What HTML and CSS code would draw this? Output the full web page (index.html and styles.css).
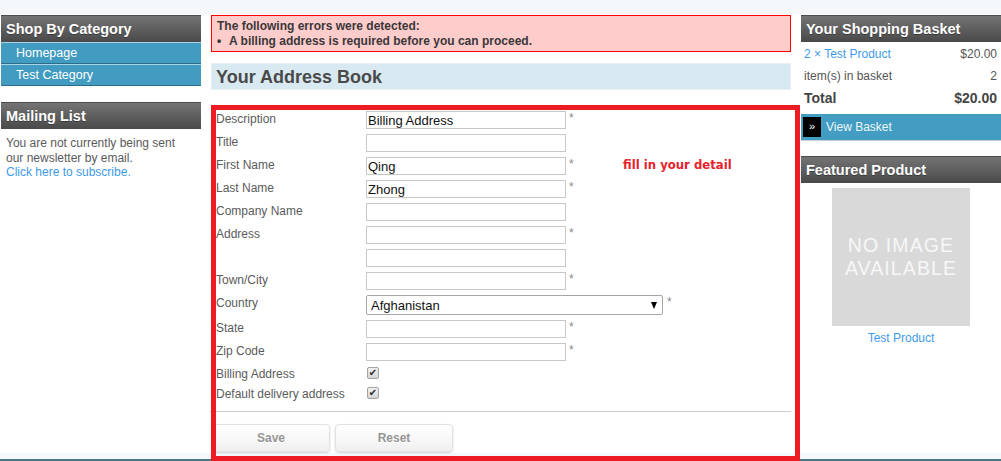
FILE: index.html
```html
<!DOCTYPE html>
<html lang="en">
<head>
<meta charset="utf-8">
<title>Your Address Book</title>
<link rel="stylesheet" href="styles.css">
</head>
<body>
<div class="topstrip"></div>
<div class="wrapper">
  <aside class="side">
    <section class="box">
      <h2 class="box-head">Shop By Category</h2>
      <ul class="cat-nav">
        <li><a href="#">Homepage</a></li>
        <li><a href="#">Test Category</a></li>
      </ul>
    </section>
    <section class="box mailing">
      <h2 class="box-head">Mailing List</h2>
      <p class="box-text">You are not currently being sent our newsletter by email.<br><a href="#" class="link">Click here to subscribe.</a></p>
    </section>
  </aside>

  <main class="center">
    <div class="errors">
      <p>The following errors were detected:</p>
      <ul><li><span class="bullet">•</span>A billing address is required before you can proceed.</li></ul>
    </div>
    <h1 class="page-title">Your Address Book</h1>
    <form class="address-form">
      <div class="fields">
        <label class="lbl">Description</label>
        <div class="ctl"><input class="txt" type="text" value="Billing Address"><span class="req">*</span></div>
        <label class="lbl">Title</label>
        <div class="ctl"><input class="txt" type="text"></div>
        <label class="lbl">First Name</label>
        <div class="ctl"><input class="txt" type="text" value="Qing"><span class="req">*</span></div>
        <label class="lbl">Last Name</label>
        <div class="ctl"><input class="txt" type="text" value="Zhong"><span class="req">*</span></div>
        <label class="lbl">Company Name</label>
        <div class="ctl"><input class="txt" type="text"></div>
        <label class="lbl">Address</label>
        <div class="ctl"><input class="txt" type="text"><span class="req">*</span></div>
        <span class="lbl"></span>
        <div class="ctl"><input class="txt" type="text"></div>
        <label class="lbl">Town/City</label>
        <div class="ctl"><input class="txt" type="text"><span class="req">*</span></div>
        <label class="lbl">Country</label>
        <div class="ctl"><span class="sel-wrap"><select class="sel"><option>Afghanistan</option></select></span><span class="req req-sel">*</span></div>
        <label class="lbl">State</label>
        <div class="ctl"><input class="txt" type="text"><span class="req">*</span></div>
        <label class="lbl">Zip Code</label>
        <div class="ctl"><input class="txt" type="text"><span class="req">*</span></div>
        <label class="lbl">Billing Address</label>
        <div class="ctl"><label class="chk"><input type="checkbox" checked><span class="chk-box">✔</span></label></div>
        <label class="lbl">Default delivery address</label>
        <div class="ctl"><label class="chk"><input type="checkbox" checked><span class="chk-box">✔</span></label></div>
      </div>
      <hr class="divider">
      <div class="actions">
        <button type="button" class="btn">Save</button>
        <button type="reset" class="btn">Reset</button>
      </div>
      <div class="annot-box"></div>
      <p class="annot-note">fill in your detail</p>
    </form>
  </main>

  <aside class="side">
    <section class="box">
      <h2 class="box-head">Your Shopping Basket</h2>
      <div class="basket">
        <div class="b-row"><a href="#" class="link">2 × Test Product</a><span>$20.00</span></div>
        <div class="b-row"><span>item(s) in basket</span><span>2</span></div>
        <div class="b-row b-total"><span>Total</span><span>$20.00</span></div>
      </div>
      <a href="#" class="view-basket"><span class="vb-icon">»</span>View Basket</a>
    </section>
    <section class="box featured">
      <h2 class="box-head">Featured Product</h2>
      <div class="noimg"><span class="noimg-line">NO IMAGE</span><span class="noimg-line">AVAILABLE</span></div>
      <a href="#" class="link feat-link">Test Product</a>
    </section>
  </aside>
</div>
<footer class="footer"><div class="footer-bar"></div></footer>
</body>
</html>
```
FILE: styles.css
```css
* { box-sizing: border-box; }
html, body { margin: 0; padding: 0; }
body {
  background: #f5f8fb;
  font-family: "Liberation Sans", Arial, sans-serif;
  font-size: 12px;
  color: #555;
  overflow: hidden;
}
a { text-decoration: none; }
.link { color: #3d9be9; }

.topstrip { height: 14px; }

.wrapper {
  display: flex;
  align-items: flex-start;
  gap: 10px;
  padding: 1px 0 0 1px;
  background: #fff;
}

.side { width: 200px; flex: none; }
.center { width: 580px; flex: none; }

.box-head {
  margin: 0;
  height: 27px;
  line-height: 26px;
  padding-left: 5px;
  border-top: 1px solid #4c4c4c;
  background: linear-gradient(#747474, #494949);
  color: #fff;
  font-size: 14.5px;
  font-weight: bold;
  text-shadow: 0 1px 0 rgba(0,0,0,.35);
}

.cat-nav { list-style: none; margin: 0; padding: 0; }
.cat-nav li {
  height: 22px;
  border-top: 1px solid #a9d3e5;
  border-bottom: 1px solid #2d6c88;
  background: #429bc1;
}
.cat-nav a {
  display: block;
  line-height: 21px;
  padding-left: 15px;
  color: #fff;
  font-size: 12.5px;
}

.mailing { margin-top: 16px; }
.box-text {
  margin: 0;
  padding: 7px 16px 0 5px;
  line-height: 14.5px;
  color: #5a5a5a;
}

/* center */
.errors {
  height: 37px;
  background: #ffcccc;
  border: 1px solid #ff0000;
  padding: 3px 5px 2px;
  line-height: 15px;
  font-weight: bold;
  color: #383838;
}
.errors p, .errors ul { margin: 0; padding: 0; list-style: none; }
.bullet { display: inline-block; width: 12px; }

.page-title {
  margin: 11px 0 0;
  height: 27px;
  line-height: 26px;
  padding-left: 4px;
  background: #d9e9f2;
  border: 1px solid #e8eff4;
  font-size: 18px;
  font-weight: bold;
  color: #4a4a4a;
}

.address-form {
  position: relative;
  margin-top: 15px;
  padding: 6px 0 1px;
}
.fields {
  display: grid;
  grid-template-columns: 150px 1fr;
  row-gap: 5px;
  padding-left: 5px;
}
.lbl {
  display: block;
  padding-top: 1px;
  line-height: 14px;
  color: #5b5b5b;
}
.ctl { display: flex; align-items: flex-start; }
.txt {
  width: 200px;
  height: 18px;
  margin: 0;
  padding: 0 1px;
  border: 1px solid #c8c8c8;
  font-family: "Liberation Sans", Arial, sans-serif;
  font-size: 13px;
  color: #111;
  background: #fff;
}
.req {
  margin-left: 3px;
  line-height: 14px;
  color: #8a8a8a;
  font-size: 12px;
}
.req-sel { margin-left: 4px; }

.sel-wrap { position: relative; display: block; }
.sel {
  display: block;
  width: 297px;
  height: 20px;
  margin: 0;
  padding: 0 0 0 4px;
  border: 1px solid #a6a6a6;
  border-radius: 2px;
  background: #fff;
  font-family: "Liberation Sans", Arial, sans-serif;
  font-size: 13px;
  color: #111;
  appearance: none;
  -webkit-appearance: none;
}
.sel-wrap::after {
  content: "";
  position: absolute;
  right: 6px;
  top: 7px;
  border-left: 3.5px solid transparent;
  border-right: 3.5px solid transparent;
  border-top: 7px solid #000;
  pointer-events: none;
}

.chk { display: block; height: 15px; }
.chk input { position: absolute; opacity: 0; width: 0; height: 0; margin: 0; }
.chk-box {
  display: block;
  width: 12px;
  height: 12px;
  margin: 1px 0 0 1px;
  border: 1px solid #a3a3a3;
  border-radius: 2px;
  background: linear-gradient(#f0f0f0, #d6d6d6);
  font-family: "DejaVu Sans", sans-serif;
  font-size: 10px;
  line-height: 10px;
  text-align: center;
  color: #2e2e2e;
}

.divider {
  margin: 10px 0 12px -1px;
  border: 0;
  border-top: 1px solid #cfcfcf;
  height: 0;
}
.actions { display: flex; gap: 5px; padding-left: 1px; }
.btn {
  width: 118px;
  height: 28px;
  margin: 0;
  border: 1px solid #e2e2e2;
  border-radius: 4px;
  background: linear-gradient(#ffffff, #f0f0f0);
  box-shadow: 0 1px 2px rgba(0,0,0,.18);
  font-family: "Liberation Sans", Arial, sans-serif;
  font-size: 12px;
  font-weight: bold;
  color: #959595;
  text-shadow: 0 1px 0 #fff;
}

/* annotation drawn over the form */
.annot-box {
  position: absolute;
  top: 0;
  left: 0;
  right: -9px;
  bottom: -8px;
  border: 5px solid #ed1c24;
  pointer-events: none;
}
.annot-note {
  position: absolute;
  left: 412px;
  top: 53px;
  margin: 0;
  font-family: "DejaVu Sans", Verdana, sans-serif;
  font-size: 11.7px;
  line-height: 14px;
  font-weight: bold;
  color: #e8222a;
}

/* right */
.basket { padding: 1px 4px 0 3px; }
.b-row {
  display: flex;
  justify-content: space-between;
  height: 22px;
  line-height: 22px;
  color: #555;
}
.b-total { font-size: 14px; font-weight: bold; color: #444; }

.view-basket {
  display: flex;
  align-items: center;
  margin-top: 5px;
  height: 27px;
  padding: 0 0 1px 2px;
  background: #439cc1;
  border-bottom: 1px solid #c6ced6;
  color: #eef7fb;
  font-size: 12px;
}
.vb-icon {
  width: 18px;
  height: 20px;
  margin-right: 5px;
  background: #000;
  color: #fff;
  font-size: 11px;
  line-height: 19px;
  text-align: center;
}

.featured { margin-top: 15px; }
.noimg {
  width: 138px;
  height: 138px;
  margin: 5px auto 0;
  padding-top: 46px;
  background: #d9d9d9;
  color: #f7f7f7;
  text-align: center;
}
.noimg-line {
  display: block;
  font-size: 19.5px;
  line-height: 22.5px;
  letter-spacing: 1.1px;
}
.feat-link {
  display: block;
  margin-top: 5px;
  line-height: 14px;
  text-align: center;
}

.footer { padding-top: 6px; }
.footer-bar { height: 20px; border-top: 2px solid #4b7888; background: #f5f8fb; }
```
